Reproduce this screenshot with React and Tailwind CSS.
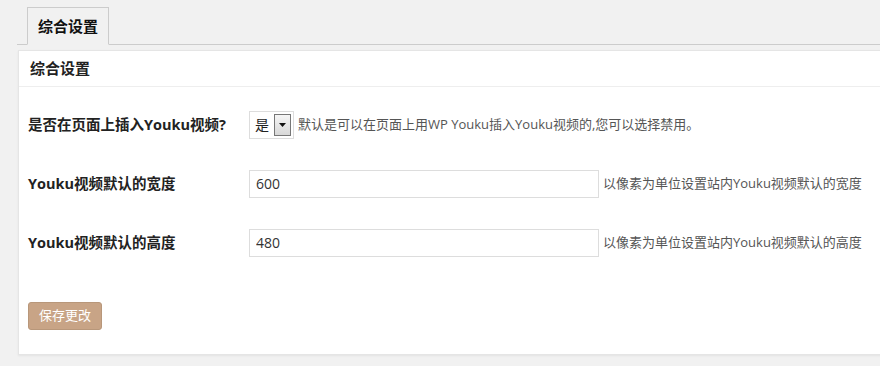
import { useState } from 'react'

const FONT = { fontFamily: '"Open Sans", "Noto Sans CJK SC", sans-serif' }

function Row({ label, children }) {
  return (
    <div className="flex items-center h-[59px]">
      <div className="w-[221px] shrink-0 text-[14.5px] font-bold text-[#222]">{label}</div>
      <div className="flex items-center gap-[4px] text-[13px] text-[#555]">{children}</div>
    </div>
  )
}

export default function App() {
  const [width, setWidth]   = useState('600')
  const [height, setHeight] = useState('480')

  return (
    <div className="w-[880px] h-[366px] bg-[#f1f1f1] overflow-hidden" style={FONT}>
      {/* tabs */}
      <div className="ml-[17px] pt-[7px] pl-[10px] flex border-b border-[#ccc]">
        <div className="h-[38px] -mb-px px-[10px] flex items-center border border-[#ccc] border-b-[#f1f1f1] bg-[#f1f1f1] text-[15px] font-bold text-[#111]">
          综合设置
        </div>
      </div>

      {/* panel */}
      <div className="mt-[5px] ml-[18px] w-[880px] bg-white border border-[#e5e5e5] shadow-[0_1px_2px_rgba(0,0,0,0.06)]">
        <div className="h-[36px] px-[11px] flex items-center border-b border-[#eee] text-[15px] font-semibold text-[#222]">
          综合设置
        </div>

        <div className="pl-[9px] pt-[8px] pb-[24px]">
          <Row label="是否在页面上插入Youku视频?">
            <div className="w-[45px] h-[28px] border border-[#ddd] flex items-center justify-between pl-[5px] pr-[2px]">
              <span className="text-[14px] text-[#222]">是</span>
              <span className="w-[17px] h-[22px] border border-[#777] bg-gradient-to-b from-[#f6f6f6] to-[#d8d8d8] flex items-center justify-center">
                <svg width="7" height="4" viewBox="0 0 7 4"><path d="M0 0h7L3.5 4z" fill="#111" /></svg>
              </span>
            </div>
            <span>默认是可以在页面上用WP Youku插入Youku视频的,您可以选择禁用。</span>
          </Row>

          <Row label="Youku视频默认的宽度">
            <input
              value={width}
              onChange={(e) => setWidth(e.target.value)}
              className="w-[350px] h-[28px] border border-[#ddd] px-[6px] text-[14px] text-[#333] outline-none"
            />
            <span>以像素为单位设置站内Youku视频默认的宽度</span>
          </Row>

          <Row label="Youku视频默认的高度">
            <input
              value={height}
              onChange={(e) => setHeight(e.target.value)}
              className="w-[350px] h-[28px] border border-[#ddd] px-[6px] text-[14px] text-[#333] outline-none"
            />
            <span>以像素为单位设置站内Youku视频默认的高度</span>
          </Row>

          <button className="mt-[30px] h-[28px] px-[10px] rounded-[3px] border border-[#b8977a] bg-[#c8a486] text-white text-[13px]">
            保存更改
          </button>
        </div>
      </div>
    </div>
  )
}
